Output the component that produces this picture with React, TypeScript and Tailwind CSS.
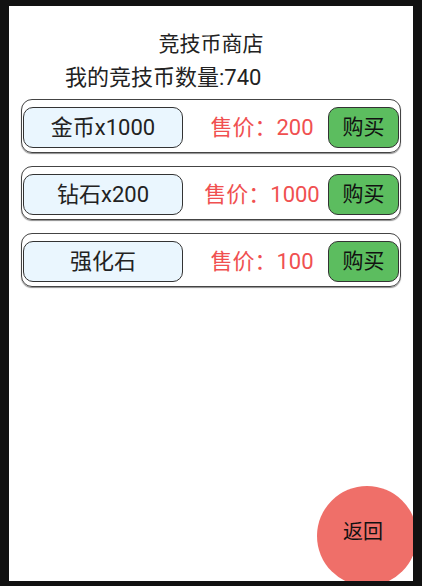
import React from "react";

const items = [
  { name: "金币x1000", price: 200 },
  { name: "钻石x200", price: 1000 },
  { name: "强化石", price: 100 },
];

export default function App() {
  return (
    <div
      className="w-[422px] h-[586px] bg-[#111111] pt-[6px] pl-[9px]"
      style={{ fontFamily: 'Roboto, "Noto Sans CJK SC", sans-serif' }}
    >
      <div className="relative w-[404px] h-[575px] bg-white overflow-hidden">
        <div className="pt-[23px] text-center text-[21px] leading-[30px] text-[#222]">竞技币商店</div>
        <div className="pl-[56px] mt-[4px] text-[22px] leading-[30px] text-[#222]">我的竞技币数量:740</div>
        <div className="mt-[6px] px-[12px] flex flex-col gap-[13px]">
          {items.map((it) => (
            <div
              key={it.name}
              className="h-[54px] rounded-[11px] border border-[#444] shadow-[0_1px_1px_rgba(0,0,0,0.45)] flex items-start pt-[7px] pl-px pr-px"
            >
              <div className="w-[160px] h-[41px] rounded-[10px] border border-[#333] bg-[#eaf6fe] flex items-center justify-center text-[22px] text-[#222]">
                {it.name}
              </div>
              <div className="flex-1 h-[41px] pl-[13px] flex items-center justify-center text-[22px] text-[#f05050]">
                售价：{it.price}
              </div>
              <div className="w-[71px] h-[41px] rounded-[10px] border border-[#333] bg-[#5cbd5f] flex items-center justify-center text-[21px] text-[#111]">
                购买
              </div>
            </div>
          ))}
        </div>
        <div className="absolute left-[308px] top-[480px] w-[100px] h-[100px] rounded-full bg-[#ef6f69] flex items-center justify-center text-[20px] text-[#111] pr-[8px] pb-[8px]">
          返回
        </div>
      </div>
    </div>
  );
}
